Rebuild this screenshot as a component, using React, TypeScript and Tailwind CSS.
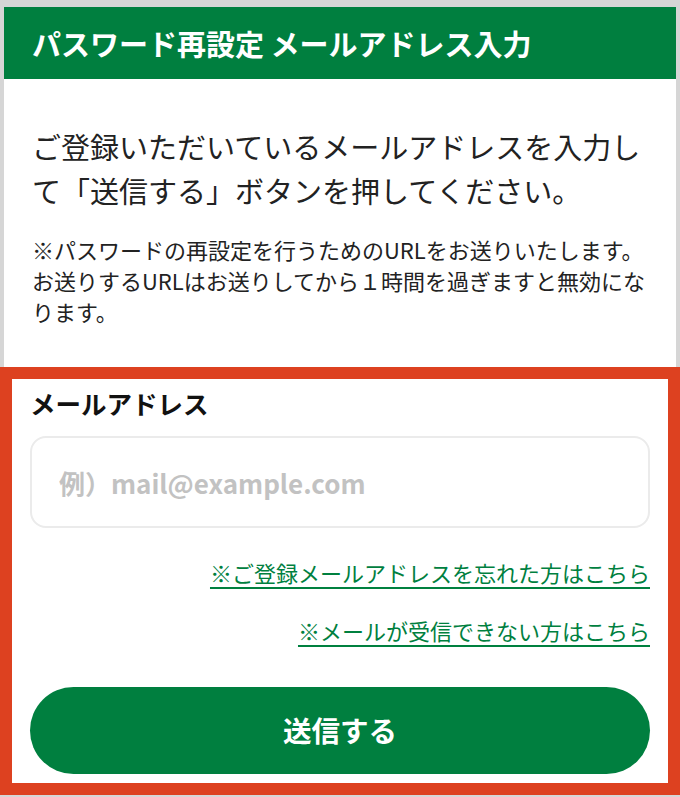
import React from 'react';

const font = { fontFamily: '"Noto Sans CJK JP", "Noto Sans", sans-serif' };

const links = [
  '※ご登録メールアドレスを忘れた方はこちら',
  '※メールが受信できない方はこちら',
];

const App = () => {
  return (
    <div className="min-h-screen bg-[#d6d6d6] pt-[7px]" style={font}>
      <div className="mx-[4px] bg-white">
        <header className="flex h-[72px] items-center bg-[#007f3f] px-[28px]">
          <h1 className="text-[29px] font-bold leading-none text-white">
            パスワード再設定 メールアドレス入力
          </h1>
        </header>

        <div className="px-[28px] pt-[45px] pb-[40px]">
          <p className="text-[29px] leading-[44px] text-[#222]">
            ご登録いただいているメールアドレスを入力して「送信する」ボタンを押してください。
          </p>
          <p className="mt-[22px] text-[22px] leading-[31px] text-[#222]">
            ※パスワードの再設定を行うためのURLをお送りいたします。お送りするURLはお送りしてから１時間を過ぎますと無効になります。
          </p>
        </div>
      </div>

      <section className="border-[12px] border-[#dd4120] bg-white px-[18px] pt-[6px] pb-[9px]">
        <label className="block text-[25.5px] font-bold leading-[36px] text-[#111]">
          メールアドレス
        </label>
        <input
          type="email"
          placeholder="例）mail@example.com"
          className="mt-[15px] h-[92px] w-full rounded-[16px] border-2 border-[#ebebeb] bg-white pl-[27px] text-[26px] font-bold text-[#222] outline-none placeholder:text-[#c2c2c2]"
        />

        <div className="mt-[28px] flex flex-col items-end gap-[25px]">
          {links.map((t) => (
            <a
              key={t}
              href="#"
              className="text-[22px] leading-[33px] text-[#00803f] underline decoration-[1.5px] underline-offset-[5px]"
            >
              {t}
            </a>
          ))}
        </div>

        <button
          type="button"
          className="mt-[40px] flex h-[87px] w-full items-center justify-center rounded-full bg-[#007f3f] text-[28.5px] font-bold text-white"
        >
          送信する
        </button>
      </section>
    </div>
  );
};

export default App;
